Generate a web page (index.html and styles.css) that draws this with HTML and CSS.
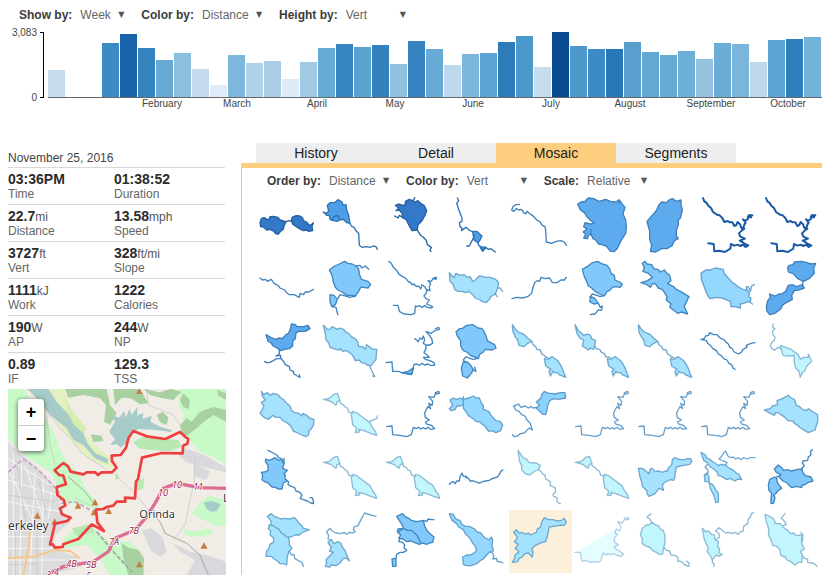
FILE: index.html
```html
<!DOCTYPE html>
<html lang="en">
<head>
<meta charset="utf-8">
<title>Ride history</title>
<link rel="stylesheet" href="styles.css">
</head>
<body>
<header>
  <form class="controls">
    <label for="show">Show by:</label>
    <span class="pick"><select id="show" class="short"><option>Week</option><option>Month</option></select></span>
    <label for="color">Color by:</label>
    <span class="pick"><select id="color"><option>Distance</option><option>Vert</option></select></span>
    <label for="height">Height by:</label>
    <span class="pick"><select id="height"><option>Vert</option><option>Distance</option></select></span>
  </form>
  <svg class="chart" viewBox="0 0 822 84" role="img" aria-label="Vert by week">
    <g class="axis">
      <text x="37" y="8" text-anchor="end">3,083</text>
      <text x="37" y="73" text-anchor="end">0</text>
      <rect x="43" y="4" width="1" height="66"/><rect x="40" y="4" width="3" height="1"/><rect x="40" y="69" width="3" height="1"/>
    </g>
    <g>
      <rect x="48" y="42" width="17" height="27" fill="#c8dcf0"/>
      <rect x="102" y="15" width="17" height="54" fill="#3d8bc4"/>
      <rect x="120" y="6" width="17" height="63" fill="#1963aa"/>
      <rect x="138" y="20" width="17" height="49" fill="#3484c0"/>
      <rect x="156" y="32" width="17" height="37" fill="#68aad6"/>
      <rect x="174" y="25" width="17" height="44" fill="#8abfde"/>
      <rect x="192" y="41" width="17" height="28" fill="#c4daee"/>
      <rect x="210" y="57" width="17" height="12" fill="#e2ecf8"/>
      <rect x="228" y="27" width="17" height="42" fill="#7db7dc"/>
      <rect x="246" y="35" width="17" height="34" fill="#b2d2ea"/>
      <rect x="264" y="33" width="17" height="36" fill="#a9cee6"/>
      <rect x="282" y="51" width="17" height="18" fill="#dfeaf7"/>
      <rect x="300" y="34" width="17" height="35" fill="#a0cae4"/>
      <rect x="318" y="20" width="17" height="49" fill="#68aad6"/>
      <rect x="336" y="16" width="17" height="53" fill="#3686c2"/>
      <rect x="354" y="19" width="17" height="50" fill="#5aa2d0"/>
      <rect x="372" y="17" width="17" height="52" fill="#3380bd"/>
      <rect x="390" y="36" width="17" height="33" fill="#90c2e0"/>
      <rect x="408" y="13" width="17" height="56" fill="#3584c0"/>
      <rect x="426" y="21" width="17" height="48" fill="#68aad6"/>
      <rect x="444" y="37" width="17" height="32" fill="#bfd9ec"/>
      <rect x="462" y="26" width="17" height="43" fill="#7cb6dc"/>
      <rect x="480" y="25" width="17" height="44" fill="#5ca4d2"/>
      <rect x="498" y="14" width="17" height="55" fill="#2c7cba"/>
      <rect x="516" y="8" width="17" height="61" fill="#4c98ca"/>
      <rect x="534" y="39" width="17" height="30" fill="#c8dcf0"/>
      <rect x="552" y="4" width="17" height="65" fill="#0a4a90"/>
      <rect x="570" y="18" width="17" height="51" fill="#4c98ca"/>
      <rect x="588" y="21" width="17" height="48" fill="#3d8bc4"/>
      <rect x="606" y="21" width="17" height="48" fill="#2878b8"/>
      <rect x="624" y="14" width="17" height="55" fill="#589fce"/>
      <rect x="642" y="24" width="17" height="45" fill="#62a8d4"/>
      <rect x="660" y="27" width="17" height="42" fill="#66aad6"/>
      <rect x="678" y="23" width="17" height="46" fill="#6eafd8"/>
      <rect x="696" y="31" width="17" height="38" fill="#96c4e0"/>
      <rect x="714" y="15" width="17" height="54" fill="#6cadd6"/>
      <rect x="732" y="16" width="17" height="53" fill="#7ab6dc"/>
      <rect x="750" y="34" width="17" height="35" fill="#bcd8ea"/>
      <rect x="768" y="12" width="17" height="57" fill="#5ca4d2"/>
      <rect x="786" y="11" width="17" height="58" fill="#2f7fbc"/>
      <rect x="804" y="9" width="17" height="60" fill="#74b2d8"/>
    </g>
    <rect class="base" x="48" y="69" width="774" height="1"/>
    <g class="months" text-anchor="middle">
      <text x="162" y="79">February</text><text x="237" y="79">March</text><text x="317" y="79">April</text><text x="395" y="79">May</text><text x="473" y="79">June</text><text x="551" y="79">July</text><text x="630" y="79">August</text><text x="711" y="79">September</text><text x="788" y="79">October</text>
    </g>
  </svg>
</header>

<main>
  <aside>
    <h2>November 25, 2016</h2>
    <dl class="stats">
      <div><dt>Time</dt><dd>03:36PM</dd></div><div><dt>Duration</dt><dd>01:38:52</dd></div>
      <div><dt>Distance</dt><dd>22.7<small>mi</small></dd></div><div><dt>Speed</dt><dd>13.58<small>mph</small></dd></div>
      <div><dt>Vert</dt><dd>3727<small>ft</small></dd></div><div><dt>Slope</dt><dd>328<small>ft/mi</small></dd></div>
      <div><dt>Work</dt><dd>1111<small>kJ</small></dd></div><div><dt>Calories</dt><dd>1222</dd></div>
      <div><dt>AP</dt><dd>190<small>W</small></dd></div><div><dt>NP</dt><dd>244<small>W</small></dd></div>
      <div><dt>IF</dt><dd>0.89</dd></div><div><dt>TSS</dt><dd>129.3</dd></div>
    </dl>
    <div class="map">
      <svg viewBox="24 12 654 558" role="img" aria-label="Ride map">
        <rect x="24" y="12" width="654" height="558" fill="#f1ede6"/>
        <!-- urban area -->
        <path fill="#dddcdc" d="M24 170L60 205 110 245 150 290 175 340 190 390 210 410 165 450 160 490 230 515 245 545 150 570H24Z"/>
        <!-- parkland -->
        <path fill="#c8fac8" d="M24 12H72L110 75 160 135 178 190 200 232 240 270 250 300 290 350 300 375 240 360 195 350 170 305 160 270 120 240 80 215 24 160Z"/>
        <path fill="#c8fac8" d="M538 12H678V240L640 215 600 200 575 172 560 150 545 120 552 90 535 55ZM600 350L630 332 678 345V420L650 425 600 400 575 385ZM190 460L240 425 280 430 300 450 330 470 390 470 420 500 435 570H330L300 520 260 480 190 490ZM550 430L580 440 625 430 640 446 600 456 556 452Z"/>
        <path fill="#e4f0bf" d="M118 12H190L215 75 240 130 285 180 325 212 345 240 330 250 285 232 245 205 205 155 165 105 120 60Z"/>
        <path fill="#d4efae" d="M196 40L215 75 260 130 240 160 210 110ZM240 160L290 205 320 215 310 225 275 205Z"/>
        <path fill="#a9d0a0" d="M195 12H320L330 60 350 85 330 120 312 110 318 60 300 40 250 30 205 38ZM340 12H420L445 55 420 58 392 40 365 38 345 60ZM430 12L480 22 512 12 545 20 520 45 480 38 450 30ZM272 148L305 152 310 168 280 172ZM470 90L488 80 505 98 500 120 480 112ZM540 120L560 100 575 110 600 80 640 66 678 75V110L640 90 610 112 590 130 560 152 545 148ZM550 25L570 45 566 72 550 66 540 45ZM650 15L678 25V45L655 32ZM365 475L385 488 415 495 432 520 430 570H385L370 520Z"/>
        <path fill="#b8e8b4" d="M400 170L430 155 480 160 535 165 545 185 510 198 450 195 415 190ZM350 260L358 280 345 285ZM412 290L432 280 430 310 412 318ZM215 430L270 418 285 440 230 455Z"/>
        <!-- reservoirs -->
        <path fill="#a7cbc8" d="M82 12H145L170 50 205 88 222 120 250 145 262 175 285 205 325 222 322 236 285 220 250 180 220 165 200 130 150 90 120 50Z"/>
        <path fill="#a7cbc8" d="M327 140L345 110 335 90 358 98 372 78 378 98 388 72 395 90 412 66 412 92 430 84 428 102 455 92 452 110 480 125 515 136 515 141 460 134 415 132 392 145 380 172 362 188 350 178 330 180 345 162Z"/>
        <path fill="#a7cbc8" d="M612 352L636 348 662 358 650 378 632 380 618 370Z"/>
        <path fill="#d9d8dc" d="M425 435L455 430 490 460 500 500 480 515 455 500 440 470ZM550 190L600 205 640 225 678 248V262L620 248 560 232 535 210ZM520 475L570 500 620 510 678 530V570H560L585 525 540 500ZM580 235L630 258 620 285 585 275Z"/>
        <!-- streets -->
        <path fill="none" stroke="#f6f6f6" stroke-width="3" d="M24 220L150 300M24 285L170 330M24 350L180 380M24 455H160M24 490H160M24 525H200M40 200V570M65 220L60 570M105 260L90 570M130 285L125 570M155 320L145 400M24 250L100 410M75 240L130 400"/>
        <path fill="none" stroke="#c4c4c6" stroke-width="2" d="M24 330L165 350M50 230L78 420M30 540L110 535M115 280L140 390M45 430V570M110 440L112 570M145 85L180 130 210 160 245 205 290 235 340 265 400 320 445 375M440 12L445 60 520 90 545 125M140 95L150 180 165 240M585 220L582 300M580 300L555 420 520 465M225 340L280 365"/>
        <path fill="none" stroke="#a6a6a8" stroke-width="3" d="M445 375L480 410 495 445 560 475 600 510 625 570M205 275L255 320 290 365"/>
        <path fill="none" stroke="#aaa" stroke-width="6" stroke-dasharray="14 5" d="M290 440L340 500 395 560"/>
        <path fill="none" stroke="#f7c78c" stroke-width="6" d="M24 520L100 515 165 495 210 498 240 520M90 430L85 490 70 570"/>
        <path fill="none" stroke="#c9a0cc" stroke-width="5" stroke-dasharray="13 7" d="M24 262L70 222 110 250 145 285 175 320 185 355 225 350 280 380"/>
        <!-- highway -->
        <path fill="none" stroke="#dc6f92" stroke-width="10" d="M140 570L190 545 280 530 325 500 345 460 405 435 440 395 465 355 490 310 530 295 600 308 678 310"/>
        <g fill="#c77c43"><path d="M408 27l10-17 10 17zM102 401l10-19 10 19zM224 371l10-19 10 19zM275 361l10-19 10 19zM316 387l10-19 10 19zM154 419l10-19 10 19zM272 391l10-19 10 19zM601 491l11-19 11 19zM408 547l10-19 10 19z"/></g>
        <!-- ride -->
        <path fill="none" stroke="#ee3f3f" stroke-width="8" stroke-linejoin="round" stroke-linecap="round" d="M150 478L158 478 165 488 188 486 190 478 235 462 275 418 312 438 292 412 288 374 310 372 320 366 340 362 350 350 376 350 375 338 405 340 408 290 414 282 426 218 485 204 548 205 549 182 562 176 565 162 554 154 540 141 496 162 440 154 400 138 386 158 378 188 362 210 335 212 336 228 350 248 336 262 304 262 294 270 286 262 260 262 250 268 212 260 204 244 190 234 164 256 178 270 190 272 198 298 170 306 172 330 192 346 196 362 180 370 186 388 212 398 202 408 165 416Z"/>
        <g class="place"><text x="24" y="434" font-size="36">erkeley</text><text x="418" y="398" font-size="33">Orinda</text><text x="669" y="350" font-size="33">L</text></g>
        <g class="exits"><text x="474" y="332">10</text><text x="516" y="308">10</text><text x="580" y="314">11</text><text x="386" y="446">7B</text><text x="327" y="480">7A</text><text x="199" y="546">4B</text><text x="258" y="550">5B</text><text x="162" y="570">4</text><text x="138" y="580">3</text><text x="259" y="583">5</text></g>
      </svg>
      <div class="zoom"><button type="button" aria-label="Zoom in">+</button><button type="button" aria-label="Zoom out">−</button></div>
    </div>
  </aside>

  <section class="panel">
    <nav class="tabs">
      <button type="button">History</button><button type="button">Detail</button><button type="button" class="active">Mosaic</button><button type="button">Segments</button>
    </nav>
    <div class="body">
      <form class="controls">
        <label for="order">Order by:</label>
        <span class="pick"><select id="order"><option>Distance</option><option>Vert</option></select></span>
        <label for="tint">Color by:</label>
        <span class="pick"><select id="tint"><option>Vert</option><option>Distance</option></select></span>
        <label for="scale">Scale:</label>
        <span class="pick"><select id="scale"><option>Relative</option><option>Absolute</option></select></span>
      </form>

      <svg class="defs" aria-hidden="true">
        <symbol id="coast" viewBox="489 15 189 189"><path class="line" d="M504 24L508 34 514 38 520 47 528 54 534 66 546 74 554 76 562 84 568 96 578 93 584 97 592 97 598 108 604 105 608 96 616 104 618 112 624 118 628 104 632 98 624 88 630 92 638 88 640 80 652 76M618 112L628 116 620 122 612 130 616 140 630 146 614 152 622 156 630 162 640 166 632 171 624 164 616 168 608 164 598 167 588 162 586 176 570 186 552 182 538 184 536 162 520 160"/><path class="line knob" d="M638 82l3-6 8 0-1 6z"/></symbol>
        <symbol id="kites" viewBox="300 9 189 189"><path d="M310 20L318 32 328 42 338 46 346 50 358 62 368 70 356 76 344 86 330 82 326 66 320 58 312 42ZM406 122L416 124 430 116 446 128 454 140 460 152 470 178 450 170 446 164 436 164 432 160 424 174 420 160 426 154 410 144Z"/><path class="line" d="M368 70L372 80 380 86 384 94 394 96 398 108 406 112 410 118 416 118"/></symbol>
        <symbol id="bird" viewBox="210 198 189 189"><path d="M220 244L236 242 244 236 250 230 262 226 266 236 270 248 262 250 258 262 242 250 230 246ZM304 290L308 280 320 284 330 292 346 304 360 314 368 330 376 340 380 352 362 346 342 338 326 334 328 342 316 344 320 330 308 320 306 304Z"/><path class="line" d="M268 248L272 256 280 260 284 266 292 270 296 282 308 286"/></symbol>
        <symbol id="shore" viewBox="399 198 189 189"><path class="line" d="M410 326L426 324 428 350 450 352 470 356 484 350 490 328 498 332 506 328 512 333 520 329 526 333 534 328 542 334 554 332 544 322 530 318 526 312 538 306 526 298 524 286 528 276 534 266 542 272 536 256 546 262 548 250 536 236 552 238 556 228 568 226 566 220 556 224"/></symbol>
      </svg>

      <div class="mosaic">
        <svg class="t1" viewBox="21 15 189 189"><path d="M30 98L34 86 42 83 52 88 58 88 60 80 70 79 84 82 90 90 100 93 108 95 102 108 100 118 92 124 84 133 76 130 72 124 60 118 50 120 42 112 32 110ZM124 92L126 82 138 77 150 78 158 84 160 92 172 98 176 106 184 104 190 98 186 110 188 122 176 124 170 120 160 122 148 116 136 108 128 102Z"/><path class="line" d="M106 96L116 92 124 94"/></svg>
        <svg class="t2" viewBox="210 15 189 189"><path d="M220 66L228 70 236 64 232 46 240 38 254 38 264 29 276 36 280 46 288 44 290 60 296 76 300 100 290 98 280 88 268 90 262 94 250 92 240 88 238 76 230 76Z"/><path class="line" d="M300 100L304 108 312 112 318 122 326 130 328 166 336 172 350 170 360 172 370 168 378 170 382 178M246 90L252 80 264 76 268 86"/></svg>
        <svg class="t1" viewBox="399 15 189 189"><path d="M436 46L446 42 458 46 466 44 466 34 478 28 486 32 490 30 492 38 504 32 512 40 522 46 530 62 524 78 516 92 504 104 502 120 486 122 478 108 472 96 468 88 458 84 456 70 448 60 438 62 446 54Z"/><path class="line" d="M490 32L494 23M434 78L444 84 448 76 458 82M502 120L512 136 520 142 528 150 532 164 544 172 540 180 543 184"/></svg>
        <svg class="t2" viewBox="588 15 189 189"><path d="M668 124L680 124 696 138 690 150 684 158 672 150ZM690 170L698 184 708 172Z"/><path class="line" d="M622 24L626 32 620 40 624 52 628 64 636 84 636 94 628 98 630 110 636 114 634 122 648 112 660 122 670 126M674 136L668 148 662 160 658 168 650 168M684 158L686 166 692 170 696 180 706 172 716 178 722 176 736 186"/></svg>
        <svg class="t3" viewBox="-78 15 189 189"><path class="line" d="M-46 43L-58 44 -66 50 -70 60 -64 64 -56 56 -48 60 -40 58 -34 68 -28 72 -24 64 -14 72 -8 76 0 84 8 92 14 94 22 106 30 110 32 122 34 156 50 160 64 154 78 152 88 156 94 166"/></svg>
        <svg class="t3" viewBox="111 15 189 189"><path d="M128 42L138 36 150 34 160 24 176 26 192 34 212 28 226 34 240 36 254 30 260 40 270 52 264 72 272 90 274 110 272 130 258 152 248 174 238 185 226 184 214 168 200 164 190 162 182 150 174 146 168 132 160 136 158 146 146 144 152 132 144 126 156 118 146 110 150 98 166 102 178 100 168 92 156 80 148 68 136 60Z"/><path class="line" d="M168 118V136M250 30L252 40"/></svg>
        <svg class="t3" viewBox="300 15 189 189"><path d="M372 44L380 36 394 38 402 30 412 26 424 34 438 30 438 44 442 60 436 84 430 90 430 104 424 120 424 138 430 146 418 152 412 166 396 176 380 176 362 186 346 184 350 166 344 148 344 124 336 94 350 78 358 70 366 58Z"/></svg>
        <svg class="t0"><use href="#coast"/></svg>
        <svg class="t0"><use href="#coast"/></svg>

        <svg class="t4" viewBox="21 204 189 189"><path class="line" d="M30 264L38 270 46 268 52 274 64 268 72 280 84 286 90 294 104 300 110 308 118 314 132 314 148 322 150 310 160 314 166 306 176 306 190 298"/></svg>
        <svg class="t4" viewBox="210 204 189 189"><path d="M238 240L254 228 268 222 284 214 294 220 306 222 318 228 326 236 328 252 334 268 354 274 362 284 354 294 340 292 332 292 326 304 316 318 304 316 292 316 276 306 264 300 256 292 250 276 246 256ZM240 314L252 316 262 328 256 344 246 350 240 336Z"/><path class="line" d="M318 228L330 226 336 234 346 228 356 238M316 318L300 322 288 318 270 314 264 326M246 350L258 352 260 362 264 374"/></svg>
        <svg class="t4" viewBox="399 204 189 189"><path class="line" d="M416 214L424 220 430 232 442 244 448 254 462 262 468 266 476 276 480 276 486 284 492 282 500 290 506 288 512 297 516 284 524 290 530 300 540 302 538 290 542 282 534 272 544 274 550 264 560 262 558 268 550 266M532 298L528 310 522 318 528 326 538 330 530 342 548 350 544 354 532 352 524 347 516 352 508 347 500 350 496 348 494 370 484 374 462 372 448 364 444 346 430 346"/></svg>
        <svg class="t5" viewBox="588 204 189 189"><path d="M598 248L606 258 612 262 618 250 630 256 642 254 652 262 660 260 668 274 676 270 688 258 710 262 722 262 736 268 746 278 742 296 736 312 722 320 718 328 708 338 696 334 690 330 676 324 668 314 656 304 646 308 636 304 624 304 614 298 610 284 600 274Z"/><path class="line" d="M744 294L750 294 758 304M734 310L742 320"/></svg>
        <svg class="t4" viewBox="-78 204 189 189"><path class="line" d="M-69 326L-54 322 -38 324 -22 320 -10 310 -6 292 0 276 8 272 14 274 18 262 30 266 44 264 52 278 66 278 78 270 88 270 94 262"/></svg>
        <svg class="t4" viewBox="111 204 189 189"><path d="M142 238L156 230 164 224 172 218 188 214 202 222 216 226 224 236 228 250 238 256 240 270 254 276 262 282 256 292 242 290 232 292 224 302 216 304 208 318 194 312 180 304 170 294 160 288 154 272 148 260ZM168 320L180 326 190 340 176 342 164 334Z"/><path class="line" d="M208 316L196 320 186 316 172 312 164 322M190 340L196 352 202 348 200 360 190 360 180 372 166 374"/></svg>
        <svg class="t4" viewBox="300 204 189 189"><path d="M322 220L330 214 336 222 350 224 356 236 368 238 376 246 388 240 396 250 404 256 408 272 398 280 408 286 416 290 424 298 436 304 462 320 452 340 448 350 458 372 440 366 428 370 412 358 404 352 408 342 394 330 396 320 390 310 382 298 370 294 360 280 352 282 346 292 336 284 318 278 338 272 352 262 340 250 324 244 328 232Z"/></svg>
        <svg class="t5a" viewBox="489 204 189 189"><path d="M498 250L512 240 526 240 540 234 564 238 568 250 574 258 582 266 590 276 600 282 608 290 628 300 636 300 644 308 640 320 648 324 646 334 636 336 626 340 616 342 616 354 600 350 588 350 586 334 566 326 548 322 524 326 514 308 508 292 500 270Z"/><path class="line" d="M636 302L634 290 640 290 646 304 650 288 658 284M644 336L652 342"/></svg>
        <svg class="t3" viewBox="678 204 189 189"><path d="M758 234L762 226 774 224 778 216 800 214 816 218 828 222 842 220 836 236 838 250 822 266 806 274 788 266 776 252 760 246ZM802 284L808 294 790 300 778 302 770 316 772 328 754 338 744 344 736 358 720 370 704 374 696 364 694 350 698 332 706 322 704 312 720 318 732 312 740 312 752 304 760 286 772 284 784 290Z"/><path class="line" d="M804 274L802 286"/></svg>

        <svg class="t3" viewBox="21 9 189 189"><path d="M48 50L62 58 76 64 88 60 96 62 108 50 116 46 122 30 124 18 136 20 142 26 160 26 174 22 180 32 166 40 148 40 138 44 136 62 128 70 128 84 118 92 104 94 92 98 84 92 70 84 62 74 54 70Z"/><path class="line" d="M88 92L88 108 78 114 92 112 92 122 80 122 70 128 58 134 50 134 44 130M92 120L102 132 106 140 118 146 120 156 130 160 132 168 142 174 150 178 148 170"/></svg>
        <svg class="t5" viewBox="210 9 189 189"><path d="M220 22L232 34 240 34 246 26 262 34 270 30 280 34 290 44 296 46 304 56 318 64 324 74 326 86 338 86 346 94 350 80 358 86 368 94 380 94 378 124 364 142 352 142 346 136 334 134 328 126 316 128 308 112 296 102 290 98 278 100 272 92 268 96 258 94 240 88 236 74 228 66 226 46Z"/><path class="line" d="M358 142L366 160 374 176 368 174"/></svg>
        <svg class="t4" viewBox="399 9 189 189"><path d="M456 164L474 160 490 150 486 168Z"/><path class="line" d="M408 134L426 132 428 160 446 160 460 166 484 170 492 140 500 138 508 142 516 136 524 141 534 138 542 142 554 142 552 134 540 128 526 124 520 118 538 118 530 110 522 104 528 92 528 82 540 80 548 76 546 64 540 54 528 40 544 46 554 38 568 34 566 28 556 32M494 62L500 66 504 72 510 60 516 64 520 54 524 66 520 76 530 82 540 82"/></svg>
        <svg class="t4" viewBox="588 9 189 189"><path d="M618 42L628 32 636 32 650 22 668 20 684 30 696 32 702 40 708 54 712 68 722 74 734 80 738 90 726 96 706 94 698 104 690 108 684 122 672 116 664 114 650 102 640 98 632 84 632 68 622 54ZM640 132L652 132 662 142 670 154 664 166 652 180 638 174 634 150Z"/><path class="line" d="M686 120L670 124 656 120 648 116 640 126 646 132M668 156L678 160 674 148"/></svg>
        <svg class="t5"><use href="#kites"/></svg>
        <svg class="t5" viewBox="111 9 189 189"><path d="M120 20L130 38 138 44 146 52 158 48 166 52 170 62 182 68 176 94 166 90 160 96 142 84 146 66 136 62 126 46ZM217 122L227 124 241 116 257 128 265 140 271 152 281 178 261 170 257 164 247 164 243 160 235 174 231 160 237 154 221 144Z"/><path class="line" d="M180 84L184 92 194 94 200 104 208 106 212 116 226 118"/></svg>
        <svg class="t5"><use href="#kites"/></svg>
        <svg class="t4" viewBox="489 9 189 189"><path class="line" d="M498 64L508 62 512 54 520 52 524 44 536 50 546 50 558 62 566 64 574 74 580 78 584 88 590 90 598 102 610 108 618 104 624 94 636 88 634 82 648 76 660 74M498 64L514 68 518 76 526 82 534 92 544 98 550 108 558 112 566 122 576 126 582 136 590 140 594 150 600 154"/></svg>
        <svg class="t6" viewBox="678 9 189 189"><path d="M736 82L768 94 790 110 796 124 806 118 820 118 820 108 830 130 814 146 810 158 802 164 796 178 792 160 782 150 778 134 778 112 762 114 744 112Z"/><path class="line" d="M716 18L712 26 720 32 712 40 714 50 720 58 718 66 710 74 706 84 712 94 720 96 728 88 738 92"/></svg>

        <svg class="t5" viewBox="21 198 189 189"><path d="M34 220L42 230 52 224 60 232 70 226 84 230 92 240 100 244 110 256 120 264 124 276 134 284 146 286 156 294 158 286 170 292 178 300 192 304 190 322 184 332 176 340 176 350 168 356 148 348 138 342 130 340 126 330 120 322 108 312 98 308 90 298 78 298 68 292 56 304 42 298 30 286 36 276 42 264 34 254 46 246 38 236Z"/></svg>
        <svg class="t6" viewBox="210 198 189 189"><use href="#bird" x="210" y="198" width="189" height="189"/><path class="line" d="M358 312L362 308 370 306 380 302 382 294"/></svg>
        <svg class="t4"><use href="#shore"/></svg>
        <svg class="t5a" viewBox="588 198 189 189"><path d="M598 272L608 262 600 246 610 240 620 244 630 240 640 244 656 240 670 234 678 240 688 240 694 256 700 262 700 274 716 280 722 290 730 300 738 308 750 310 758 320 752 338 738 344 726 338 716 340 704 324 696 318 690 312 678 310 670 302 656 294 650 284 640 270 640 260 630 264 620 264 616 274 604 278Z"/><path class="line" d="M640 236v28"/></svg>
        <svg class="t5b" viewBox="-78 198 189 189"><path d="M4 252L18 240 20 230 28 220 40 226 50 226 60 228 76 224 90 224 92 240 70 244 56 242 44 248 38 262 36 276 32 290 22 288 14 280 4 270 14 262Z"/><path class="line" d="M6 268L-6 270 -12 266 -20 270 -30 264 -42 268 -50 258 -58 262 -64 264 -58 276 -48 280 -40 290 -30 294 -24 306 -14 316 -8 336 -16 330 -24 336 -30 344 -46 348 -52 354 -62 356 -68 350"/></svg>
        <svg class="t4b"><use href="#shore"/></svg>
        <svg class="t4b"><use href="#shore"/></svg>
        <svg class="t4b"><use href="#shore"/></svg>
        <svg class="t5" viewBox="678 198 189 189"><path d="M688 276L706 272 712 264 728 260 726 248 742 242 760 232 768 240 778 244 784 262 794 266 802 274 814 278 820 272 834 282 848 290 848 310 840 336 820 344 804 334 796 330 788 322 778 316 776 310 760 308 750 298 738 290 730 284 722 284 718 292 702 284Z"/></svg>

        <svg class="t4" viewBox="21 6 189 189"><path d="M48 42L56 46 64 44 74 38 86 46 96 44 102 56 98 70 112 76 102 86 106 92 104 100 112 108 100 114 96 132 84 132 78 128 66 126 54 114 44 110 36 104 38 92 34 82 48 80 54 76 54 60 46 50Z"/><path class="line" d="M54 16L70 24 80 30 86 38 96 42 98 52M102 40V56M108 104L116 110 114 118 124 124 134 128 138 138 150 142 156 152 150 160 160 164 172 168 182 174 190 176 190 166 186 158 180 158"/></svg>
        <svg class="t6"><use href="#bird"/></svg>
        <svg class="t6"><use href="#bird"/></svg>
        <svg class="t4" viewBox="588 6 189 189"><path class="line" d="M598 118L604 112 610 110 616 116 620 108 628 108 630 96 636 84 640 94 650 94 648 98 656 100 660 108 672 108 680 112 690 114 698 110 706 108 718 106 724 102 736 98 742 96 748 88 752 80 758 74"/></svg>
        <svg class="t6" viewBox="-78 6 189 189"><path d="M-51 16L-44 26 -36 38 -26 42 -18 52 -4 54 4 54 16 62 10 74 0 78 -8 84 -16 90 -30 86 -40 74 -40 62 -46 50Z"/><path class="line" d="M12 74L20 82 24 88 30 90 32 102 40 106 46 112 46 122 60 128 62 140 54 148 56 154 66 158 66 168 70 174 76 176"/></svg>
        <svg class="t6"><use href="#bird"/></svg>
        <svg class="t5" viewBox="300 6 189 189"><path d="M310 70L320 70 328 74 342 86 346 72 352 70 360 80 372 78 382 82 390 78 398 78 400 68 410 60 412 44 418 38 434 44 450 44 458 40 468 42 470 50 464 58 442 62 424 66 420 86 420 96 416 106 406 104 398 108 388 112 382 122 386 136 372 130 360 146 342 154 336 146 336 138 322 124 320 110 316 100Z"/></svg>
        <svg class="t5" viewBox="489 6 189 189"><path d="M498 22L512 30 514 38 524 42 532 50 540 54 550 62 556 58 572 60 580 68 592 74 604 84 612 88 620 104 608 102 600 108 584 100 576 104 560 94 550 92 546 80 536 72 526 66 518 54 506 46ZM508 90L516 84 522 96 522 110 510 110ZM522 112L534 120 542 134 550 146 550 172 542 172 538 154 532 142 526 130Z"/><path class="line" d="M572 60L576 52 564 48 552 42 560 34 566 24 572 18 578 32 586 38 594 36 602 42 610 38 618 44 626 38 636 42 646 38 660 38M518 58L510 66 518 74 520 82 512 90"/></svg>
        <svg class="t4" viewBox="678 6 189 189"><path d="M718 72L730 60 740 68 746 76 756 74 770 78 784 74 800 72 804 84 812 92 828 96 834 108 820 112 812 118 802 120 800 128 786 124 770 128 756 114 744 108 732 96 738 88 724 82ZM704 104L718 96 726 100 726 110 732 120 740 130 730 136 724 144 716 150 720 158 716 174 708 176 708 160 710 146 702 136 700 120Z"/><path class="line" d="M832 14L826 20 828 30 820 36 818 46 804 48 802 54 808 62 802 68 802 74M724 96L734 92"/></svg>

        <svg class="t5" viewBox="21 195 189 189"><path d="M52 214L64 206 72 214 80 216 92 222 104 220 118 222 134 218 142 228 148 236 154 240 160 250 178 254 158 262 148 270 136 270 122 276 114 276 118 288 118 300 126 310 116 320 112 336 110 360 100 356 90 356 80 346 72 342 64 334 48 334 50 318 56 312 60 298 72 290 70 278 60 270 62 258 54 250 64 238 62 226Z"/><path class="line" d="M56 240L70 242 78 248 88 254 94 264 102 268 110 276M118 318L124 330 132 328 134 340 144 346 156 352 160 364"/></svg>
        <svg class="t5" viewBox="210 195 189 189"><path d="M234 292L244 284 252 296 264 290 272 294 278 308 286 318 290 330 298 348 290 340 280 340 270 354 258 362 244 360 240 366 226 364 230 354 228 344 238 334 250 322 238 318 244 308Z"/><path class="line" d="M378 214L362 210 344 204 336 218 330 230 324 242 312 246 310 254 316 260 308 264 298 262 290 268 282 262 274 266 258 264 246 258 240 250 230 260 236 272 234 282 244 286"/></svg>
        <svg class="t4" viewBox="399 195 189 189"><path d="M440 214L458 206 464 214 476 220 484 226 500 230 520 226 524 244 532 258 540 266 552 276 548 292 538 294 530 298 518 294 508 298 492 292 484 288 470 290 460 282 446 280 452 270 442 260 444 252 460 250 456 238 450 230ZM426 342L438 340 438 364 428 364Z"/><path class="line" d="M444 262L460 250 472 256 484 256 500 270 508 284 512 294M522 228L532 228 534 222 544 224 552 224M450 282L446 290 458 292 464 300 462 308 470 316 460 322 450 322 440 328 438 340"/></svg>
        <svg class="t5a" viewBox="588 195 189 189"><path d="M598 206L610 208 616 220 622 224 630 226 636 238 646 244 658 244 674 252 680 260 692 264 700 274 706 280 718 284 724 276 728 284 726 300 730 318 716 324 710 330 700 342 692 346 680 356 664 362 650 362 640 358 638 336 650 330 662 330 680 318 676 304 668 294 660 280 646 266 640 254 626 246 620 236 606 226Z"/><path class="line" d="M718 320L728 324 732 336 728 342 740 340 742 350 750 350 758 354"/></svg>
        <svg class="t5 picked" viewBox="-78 195 189 189"><path d="M-64 262L-56 254 -48 264 -38 262 -30 268 -20 264 -14 270 4 262 8 250 16 248 20 232 28 218 40 224 54 224 66 228 80 226 88 220 94 232 88 240 70 242 42 246 40 262 36 276 32 290 20 292 0 302 -10 312 -6 320 -8 336 -20 324 -30 326 -38 336 -48 340 -52 350 -68 352 -62 342 -60 330 -48 320 -60 310 -50 298 -62 290 -52 278Z"/></svg>
        <svg class="t7" viewBox="111 195 189 189"><path d="M120 322L136 322 140 346 152 348 166 352 180 350 190 352 198 346 204 324 212 330 220 326 228 330 236 326 244 332 258 334 266 328 254 318 240 310 236 302 246 304 250 296 236 290 238 278 248 268 244 252Z" stroke="none"/><path class="line" d="M120 322L136 322 140 348 152 346 166 352 180 350 190 352 198 346 204 324 212 330 220 326 228 330 236 326 244 330 258 334 266 328 254 318 240 310 238 304 250 300 238 290 238 278 248 268 240 264 244 252 254 258 258 244 248 230 262 234 268 224 282 224 280 218 268 220"/></svg>
        <svg class="t6" viewBox="300 195 189 189"><path d="M322 250L334 240 342 240 352 232 362 240 370 242 376 252 384 256 390 270 390 290 386 310 382 328 372 328 364 322 352 316 344 306 334 304 322 296 322 280 316 270Z"/><path class="line" d="M348 206L336 216 344 222 350 234M386 306L394 316 404 318 408 330 422 332 430 340 428 348 440 350 450 360 462 364 462 354 454 348"/></svg>
        <svg class="t6" viewBox="489 195 189 189"><path d="M502 250L512 260 520 258 530 268 538 270 540 284 550 290 548 304 554 312 552 324 562 328 552 334 544 330 532 344 526 332 516 320 520 310 514 296 508 284Z"/><path class="line" d="M532 340L532 352 538 358 536 364M656 204L650 204 646 216 640 222 638 236 626 244 624 260 616 260 610 268 600 262 592 266 582 262 572 264 562 256 552 248 542 258 552 266 554 276 542 284"/></svg>
        <svg class="t6" viewBox="678 195 189 189"><path d="M690 208L708 216 716 222 722 236 736 236 746 248 758 256 766 266 776 264 784 272 800 270 800 296 808 312 796 320 802 330 800 352 790 352 780 360 768 350 758 346 750 336 738 332 734 312 722 302 714 302 706 280 700 270 702 254 694 230Z"/><path class="line" d="M750 206L738 220 746 226 754 238 746 242M798 262L804 270 802 290M802 330L808 340 818 342 818 352 830 354 838 356 846 364"/></svg>
      </div>
    </div>
  </section>
</main>
</body>
</html>
```

FILE: styles.css
```css
* { box-sizing: border-box; }

body {
  margin: 0;
  min-height: 100vh;
  display: flex;
  flex-direction: column;
  overflow-x: hidden;
  background: #fff;
  color: #333;
  font: 12px/14px "Liberation Sans", Arial, sans-serif;
}

button, select { font: inherit; color: inherit; border: 0; background: none; padding: 0; margin: 0; }

/* drop-down rows */
.controls { display: flex; align-items: center; }
.controls label { font-weight: bold; color: #3c3c3c; margin-right: 8px; white-space: nowrap; }
header .controls { padding: 8px 0 6px 19px; height: 28px; }
.pick { display: flex; align-items: center; margin-right: 15px; color: #666; }
.pick::after { content: "▼"; width: 8px; margin-left: -8px; font: 8px/14px "DejaVu Sans", sans-serif; color: #555; pointer-events: none; }
select { appearance: none; width: 62px; height: 14px; outline: 0; }
select.short { width: 46px; }

/* weekly chart */
.chart { display: block; width: 100%; }
.chart text { font-size: 10px; fill: #444; }
.axis rect { fill: #000; }
.base { fill: #666; }

main { display: flex; flex: 1; gap: 15px; padding-left: 8px; margin-top: 30px; }

/* ride summary */
aside { flex: 0 0 218px; display: flex; flex-direction: column; }
h2 { margin: 9px 0 2px; font-size: 12px; line-height: 14px; font-weight: normal; color: #444; }
.stats { margin: 0; display: grid; grid-template-columns: 106px 111px; }
.stats div { display: flex; flex-direction: column-reverse; height: 37px; border-top: 1px solid #d8d8d8; padding: 3px 0; }
dt { line-height: 14px; color: #666; }
dd { margin: 0; font-size: 14px; line-height: 16px; font-weight: bold; color: #2c2c2c; }
dd small { font-size: 12px; line-height: 14px; font-weight: normal; color: #555; }

.map { position: relative; }
.map svg { display: block; width: 100%; }
.map text { font-family: "Noto Sans", sans-serif; paint-order: stroke; stroke: #fff; stroke-width: 5px; stroke-linejoin: round; }
.place { fill: #333; }
.exits { fill: #98244c; font-size: 27px; font-style: italic; }
.zoom {
  position: absolute; left: 10px; top: 10px; width: 26px;
  display: flex; flex-direction: column;
  background: #fff; border-radius: 4px; box-shadow: 0 1px 5px rgba(0, 0, 0, .65);
}
.zoom button { height: 26px; font: bold 18px/26px "Liberation Sans", sans-serif; color: #000; }
.zoom button + button { border-top: 1px solid #ccc; }

/* tabbed panel */
.panel { flex: 1; min-width: 0; display: flex; flex-direction: column; }
.tabs { display: flex; padding: 1px 0 0 15px; border-bottom: 5px solid #fdce7e; }
.tabs button { width: 120px; height: 20px; font-size: 14px; background: #eee; color: #222; }
.tabs .active { background: #fdce7e; }
.body { flex: 1; border-left: 1px solid #ccc; padding: 6px 0 0 15px; overflow: hidden; }
.body .controls { padding: 0 0 7px 10px; height: 21px; }

.defs { display: none; }
.mosaic { display: grid; grid-template-columns: repeat(9, 63px); grid-auto-rows: 63px; }
.mosaic > svg { width: 63px; height: 63px; stroke-width: 4px; stroke-linejoin: round; stroke-linecap: round; }
.line { fill: none; }
.knob { fill: #1a5aa4; }

.t0 { stroke: #1a5aa4; }
.mosaic > .t0 { stroke-width: 6px; }
.t1 { fill: #3478c8; stroke: #265fa2; }
.t2 { fill: #4c9ee6; stroke: #2f72b4; }
.t3 { fill: #5dabee; stroke: #3f80bc; }
.t4 { fill: #82c9fb; stroke: #4286c0; }
.t4b { stroke: #6a9fcb; }
.t5 { fill: #a4e2fe; stroke: #6fa8cf; }
.t5a { fill: #94d7ff; stroke: #65a2cd; }
.t5b { fill: #8cd2ff; stroke: #5f9ac8; }
.t6 { fill: #c2f6ff; stroke: #8dbbd6; }
.t7 { fill: #e4fdff; stroke: #b0cee2; }
.picked { background: #fdf0da; }
```
